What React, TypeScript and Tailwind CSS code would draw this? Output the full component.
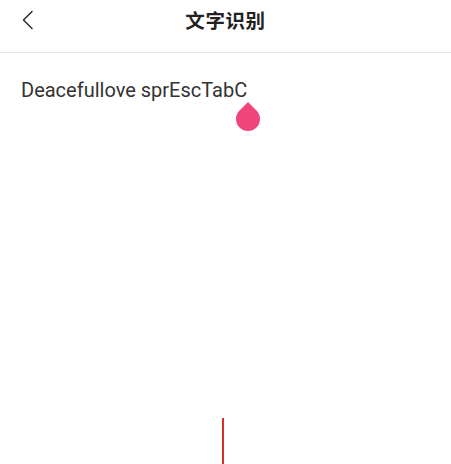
export default function App() {
  return (
    <div className="relative h-[464px] w-[451px] overflow-hidden bg-white font-['Roboto','Noto_Sans_CJK_SC',sans-serif]">
      {/* header */}
      <div className="relative flex h-[53px] items-center justify-center border-b border-[#e6e6e6]">
        <button className="absolute left-[21px] top-[10px] flex h-[20px] w-[14px] items-center justify-center">
          <svg width="14" height="20" viewBox="0 0 14 20" fill="none">
            <path d="M11 1.5 L2.5 10 L11 18.5" stroke="#333" strokeWidth="1.6" strokeLinecap="round" strokeLinejoin="round" />
          </svg>
        </button>
        <h1 className="-mt-[9px] text-[19.5px] font-bold tracking-[0.6px] text-[#222]">文字识别</h1>
      </div>

      {/* recognized text */}
      <div className="relative px-[21px] pt-[25px]">
        <p className="text-[20px] leading-[24px] text-[#333]">Deacefullove sprEscTabC</p>
        <div className="absolute left-[236px] top-[54px] h-[24px] w-[24px] rotate-45 rounded-full rounded-tl-none bg-[#f0457a]" />
      </div>

      {/* red marker */}
      <div className="absolute left-[222px] top-[418px] h-[46px] w-[2px] bg-[#d3302b]" />
    </div>
  );
}
